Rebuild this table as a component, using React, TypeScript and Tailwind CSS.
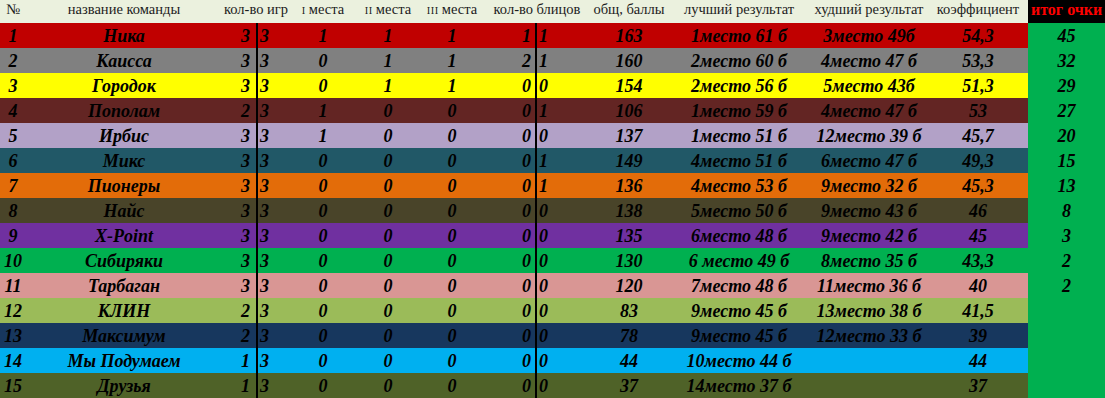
import React from "react";

type Row = {
  n: number;
  name: string;
  g: string;
  p1: string;
  p2: string;
  p3: string;
  bl: string;
  br: string;
  total: string;
  best: string;
  worst: string;
  k: string;
  pts: string;
  bg: string;
};

const rows: Row[] = [
  { n: 1, name: "Ника", g: "3", p1: "1", p2: "1", p3: "1", bl: "1", br: "1", total: "163", best: "1место 61 б", worst: "3место 49б", k: "54,3", pts: "45", bg: "bg-[#c00000]" },
  { n: 2, name: "Каисса", g: "3", p1: "0", p2: "1", p3: "1", bl: "2", br: "1", total: "160", best: "2место 60 б", worst: "4место 47 б", k: "53,3", pts: "32", bg: "bg-[#808080]" },
  { n: 3, name: "Городок", g: "3", p1: "0", p2: "1", p3: "1", bl: "0", br: "0", total: "154", best: "2место 56 б", worst: "5место 43б", k: "51,3", pts: "29", bg: "bg-[#ffff00]" },
  { n: 4, name: "Пополам", g: "2", p1: "1", p2: "0", p3: "0", bl: "0", br: "1", total: "106", best: "1место 59 б", worst: "4место 47 б", k: "53", pts: "27", bg: "bg-[#632523]" },
  { n: 5, name: "Ирбис", g: "3", p1: "1", p2: "0", p3: "0", bl: "0", br: "0", total: "137", best: "1место 51 б", worst: "12место 39 б", k: "45,7", pts: "20", bg: "bg-[#b2a1c7]" },
  { n: 6, name: "Микс", g: "3", p1: "0", p2: "0", p3: "0", bl: "0", br: "1", total: "149", best: "4место 51 б", worst: "6место 47 б", k: "49,3", pts: "15", bg: "bg-[#215867]" },
  { n: 7, name: "Пионеры", g: "3", p1: "0", p2: "0", p3: "0", bl: "0", br: "1", total: "136", best: "4место 53 б", worst: "9место 32 б", k: "45,3", pts: "13", bg: "bg-[#e36c09]" },
  { n: 8, name: "Найс", g: "3", p1: "0", p2: "0", p3: "0", bl: "0", br: "0", total: "138", best: "5место 50 б", worst: "9место 43 б", k: "46", pts: "8", bg: "bg-[#494429]" },
  { n: 9, name: "X-Point", g: "3", p1: "0", p2: "0", p3: "0", bl: "0", br: "0", total: "135", best: "6место 48 б", worst: "9место 42 б", k: "45", pts: "3", bg: "bg-[#7030a0]" },
  { n: 10, name: "Сибиряки", g: "3", p1: "0", p2: "0", p3: "0", bl: "0", br: "0", total: "130", best: "6 место 49 б", worst: "8место 35 б", k: "43,3", pts: "2", bg: "bg-[#00b050]" },
  { n: 11, name: "Тарбаган", g: "3", p1: "0", p2: "0", p3: "0", bl: "0", br: "0", total: "120", best: "7место 48 б", worst: "11место 36 б", k: "40", pts: "2", bg: "bg-[#d99694]" },
  { n: 12, name: "КЛИН", g: "2", p1: "0", p2: "0", p3: "0", bl: "0", br: "0", total: "83", best: "9место 45 б", worst: "13место 38 б", k: "41,5", pts: "", bg: "bg-[#9bbb59]" },
  { n: 13, name: "Максимум", g: "2", p1: "0", p2: "0", p3: "0", bl: "0", br: "0", total: "78", best: "9место 45 б", worst: "12место 33 б", k: "39", pts: "", bg: "bg-[#17375e]" },
  { n: 14, name: "Мы Подумаем", g: "1", p1: "0", p2: "0", p3: "0", bl: "0", br: "0", total: "44", best: "10место 44 б", worst: "", k: "44", pts: "", bg: "bg-[#00b0f0]" },
  { n: 15, name: "Друзья", g: "1", p1: "0", p2: "0", p3: "0", bl: "0", br: "0", total: "37", best: "14место 37 б", worst: "", k: "37", pts: "", bg: "bg-[#4f6228]" },
];

const cols =
  "grid grid-cols-[26px_196px_34px_34px_66px_64px_64px_51px_55px_78px_142px_118px_100px_77px]";

// small roman numeral, about x-height tall
function Roman({ n }: { n: string }) {
  return <span className="text-[10.5px] tracking-[0.5px] mr-[3px]">{n}</span>;
}

export default function App() {
  return (
    <div className="w-[1105px] h-[398px] overflow-hidden bg-white font-['Liberation_Serif',serif] text-black">
      {/* header */}
      <div className={`${cols} h-[23px] text-[14.5px] text-[#1c1c1c] leading-none`}>
        <div className="bg-[#ebf1de] flex items-center justify-center pb-1">№</div>
        <div className="bg-[#ebf1de] flex items-center justify-center pb-1">название команды</div>
        <div className="col-span-2 bg-[#ebf1de] flex items-center justify-center pb-1">кол-во игр</div>
        <div className="bg-[#ebf1de] flex items-center justify-center pb-1">
          <span>
            <Roman n="I" />места
          </span>
        </div>
        <div className="bg-[#ebf1de] flex items-center justify-center pb-1">
          <span>
            <Roman n="II" />места
          </span>
        </div>
        <div className="bg-[#ebf1de] flex items-center justify-center pb-1">
          <span>
            <Roman n="III" />места
          </span>
        </div>
        <div className="col-span-2 bg-[#ebf1de] flex items-center justify-center pb-1">кол-во блицов</div>
        <div className="bg-[#ebf1de] flex items-center justify-center pb-1">общ, баллы</div>
        <div className="bg-[#ebf1de] flex items-center justify-center pb-1">лучший результат</div>
        <div className="bg-[#ebf1de] flex items-center justify-center pb-1">худший результат</div>
        <div className="bg-[#ebf1de] flex items-center justify-center pb-1">коэффициент</div>
        <div className="bg-black flex items-center justify-start pl-[3px] pb-1 text-[#ff0000] text-[16px] font-bold whitespace-nowrap overflow-hidden">
          итог очки
        </div>
      </div>

      {/* rows */}
      {rows.map((r) => (
        <div
          key={r.n}
          className={`${cols} h-[25px] items-stretch text-[18px] font-bold italic leading-none`}>
          <div className={`${r.bg} flex items-center justify-center`}>{r.n}</div>
          <div className={`${r.bg} flex items-center justify-center`}>{r.name}</div>
          <div className={`${r.bg} flex items-center justify-end pr-[6px]`}>{r.g}</div>
          <div className={`${r.bg} flex items-center justify-start pl-[2px] border-l-2 border-black`}>3</div>
          <div className={`${r.bg} flex items-center justify-center`}>{r.p1}</div>
          <div className={`${r.bg} flex items-center justify-center`}>{r.p2}</div>
          <div className={`${r.bg} flex items-center justify-center`}>{r.p3}</div>
          <div className={`${r.bg} flex items-center justify-end pr-[4px]`}>{r.bl}</div>
          <div className={`${r.bg} flex items-center justify-start pl-[2px] border-l-2 border-black`}>{r.br}</div>
          <div className={`${r.bg} flex items-center justify-center`}>{r.total}</div>
          <div className={`${r.bg} flex items-center justify-center whitespace-nowrap`}>{r.best}</div>
          <div className={`${r.bg} flex items-center justify-center whitespace-nowrap`}>{r.worst}</div>
          <div className={`${r.bg} flex items-center justify-center`}>{r.k}</div>
          <div className="bg-[#00b050] flex items-center justify-center">{r.pts}</div>
        </div>
      ))}
    </div>
  );
}
